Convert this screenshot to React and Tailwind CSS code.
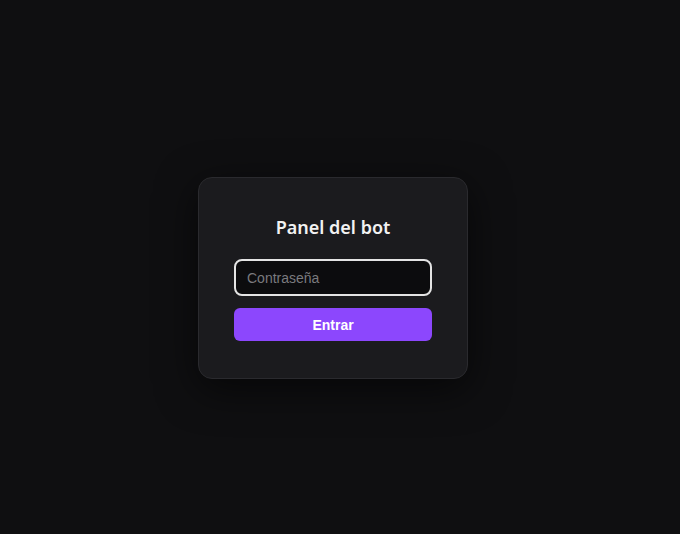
export default function App() {
  return (
    <div className="min-h-screen w-full bg-[#0f0f11] flex items-center justify-center" style={{ fontFamily: '"Liberation Sans", Arial, sans-serif' }}>
      <div className="w-[270px] mr-[14px] mt-[22px] rounded-[14px] border border-[#2a2a2e] bg-[#1b1b1e] px-[35px] pt-[36px] pb-[37px] shadow-[0_10px_40px_rgba(0,0,0,0.6)]">
        <h2 className="h-[24px] leading-[26px] text-center text-[18px] font-semibold text-[#f2f2f2] mb-[21px]" style={{ fontFamily: '"Noto Sans", sans-serif' }}>
          Panel del bot
        </h2>
        <input
          type="password"
          placeholder="Contraseña"
          className="block w-full h-[37px] rounded-[8px] border-2 border-[#e4e4e4] bg-[#0c0c0e] px-[11px] text-[14px] text-white placeholder:text-[#7a7a7e] outline-none"
        />
        <button className="mt-[12px] block w-full h-[33px] rounded-[6px] bg-[#8c47fd] text-white text-[14px] font-bold pt-[1px]">
          Entrar
        </button>
      </div>
    </div>
  );
}
